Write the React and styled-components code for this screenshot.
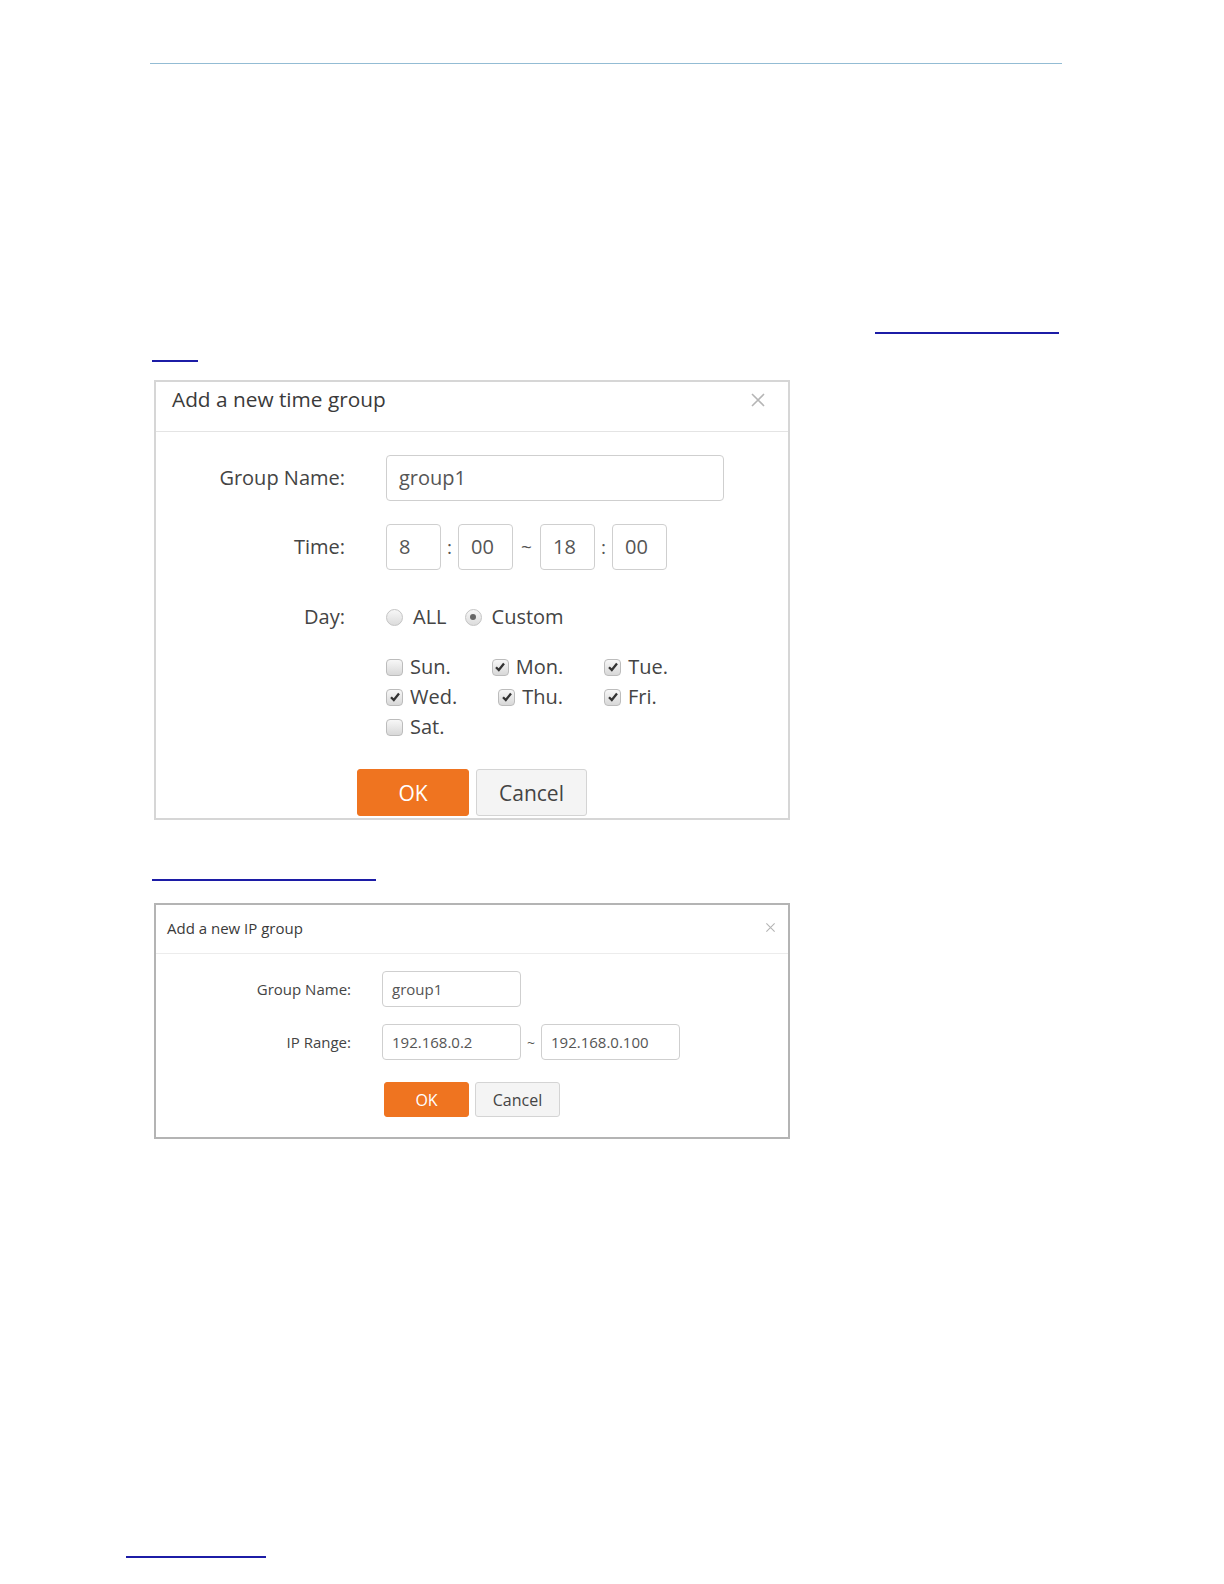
import React from 'react'
import styled, { createGlobalStyle } from 'styled-components';

const GlobalStyle = createGlobalStyle`
  body {
    margin: 0;
    background: #fff;
    font-family: "Open Sans", "Liberation Sans", sans-serif;
  }
`

const CloseIcon = ({ size }) => (
  <svg width={size} height={size} viewBox="0 0 16 16" fill="none" stroke="#b5b5b5" strokeWidth="1.6">
    <path d="M2 2 L14 14 M14 2 L2 14" />
  </svg>
)

const Check = () => (
  <svg width="12" height="12" viewBox="0 0 12 12">
    <path d="M2 6.2 L4.8 9 L10 2.5" fill="none" stroke="#333" strokeWidth="2.3" />
  </svg>
)

const CheckItem = ({ checked, label }) => (
  <SCheckItem>
    <SBox>{checked && <Check />}</SBox>
    {label}
  </SCheckItem>
)

const RadioItem = ({ checked, label }) => (
  <SRadioItem>
    <SRadio $checked={checked} />
    {label}
  </SRadioItem>
)

const App = () => {
  const days = [
    ['Sun.', false], ['Mon.', true], ['Tue.', true],
    ['Wed.', true], ['Thu.', true], ['Fri.', true],
    ['Sat.', false],
  ];

  return (
    <SPage>
      <GlobalStyle />
      <SHeaderRule />
      <SRule $top={268} $left={875} $width={184} />
      <SRule $top={26} $left={152} $width={46} />

      <STimeDialog>
        <STimeHeader>
          <span>Add a new time group</span>
          <SClose $top={2}><CloseIcon size={16} /></SClose>
        </STimeHeader>
        <STimeForm>
          <SLabel $big>Group Name:</SLabel>
          <SBigInput $width={338}>group1</SBigInput>

          <SLabel $big>Time:</SLabel>
          <STimeRow>
            <SBigInput $width={55}>8</SBigInput>
            <SSep $width={17}>:</SSep>
            <SBigInput $width={55}>00</SBigInput>
            <SSep $width={27}>~</SSep>
            <SBigInput $width={55}>18</SBigInput>
            <SSep $width={17}>:</SSep>
            <SBigInput $width={55}>00</SBigInput>
          </STimeRow>

          <SLabel $big $tall>Day:</SLabel>
          <SDayCol>
            <SRadioRow>
              <RadioItem label="ALL" />
              <RadioItem checked label="Custom" />
            </SRadioRow>
            <SCheckGrid>
              {days.map(([d, c]) => <CheckItem key={d} label={d} checked={c} />)}
            </SCheckGrid>
          </SDayCol>
        </STimeForm>
        <SButtons $gap={7}>
          <SButton $primary $w={112} $h={47} $fs={21}>OK</SButton>
          <SButton $w={111} $h={47} $fs={21}>Cancel</SButton>
        </SButtons>
      </STimeDialog>

      <SRule $top={59} $left={152} $width={224} />

      <SIpDialog>
        <SIpHeader>
          <span>Add a new IP group</span>
          <SClose $top={0}><CloseIcon size={11} /></SClose>
        </SIpHeader>
        <SIpForm>
          <SLabel>Group Name:</SLabel>
          <SSmallInput>group1</SSmallInput>

          <SLabel>IP Range:</SLabel>
          <STimeRow>
            <SSmallInput>192.168.0.2</SSmallInput>
            <SSep $width={20} $small>~</SSep>
            <SSmallInput>192.168.0.100</SSmallInput>
          </STimeRow>
        </SIpForm>
        <SButtons $gap={6} $small>
          <SButton $primary $w={85} $h={35} $fs={16}>OK</SButton>
          <SButton $w={85} $h={35} $fs={16}>Cancel</SButton>
        </SButtons>
      </SIpDialog>

      <SRule $top={417} $left={126} $width={140} />
    </SPage>
  )
};

export default App;

const SPage = styled.div`
  width: 1224px;
  height: 1584px;
  overflow: hidden;
  padding-top: 63px;
  box-sizing: border-box;
  color: #444;
`
const SHeaderRule = styled.div`
  margin: 0 162px 0 150px;
  height: 1px;
  background: #93bcd4;
`
const SRule = styled.div`
  margin: ${p => p.$top}px 0 0 ${p => p.$left}px;
  width: ${p => p.$width}px;
  height: 2px;
  background: #1c1ca6;
`
const SDialogBase = styled.div`
  margin-left: 154px;
  width: 636px;
  box-sizing: border-box;
  background: #fff;
`
const STimeDialog = styled(SDialogBase)`
  margin-top: 18px;
  height: 440px;
  border: 2px solid #d6d6d6;
`
const SIpDialog = styled(SDialogBase)`
  margin-top: 22px;
  height: 236px;
  border: 2px solid #b4b4b4;
`
const STimeHeader = styled.div`
  position: relative;
  height: 50px;
  box-sizing: border-box;
  padding: 3px 16px 0;
  font-size: 20.8px;
  line-height: 28px;
  color: #3a3a3a;
  border-bottom: 1px solid #e4e4e4;
`
const SIpHeader = styled.div`
  position: relative;
  height: 49px;
  box-sizing: border-box;
  padding: 12px 11px 0;
  font-size: 15px;
  line-height: 22px;
  color: #3a3a3a;
  border-bottom: 1px solid #ececec;
`
const SClose = styled.span`
  position: absolute;
  right: 22px;
  top: ${p => p.$top + 8}px;
  line-height: 0;
  ${SIpHeader} & {
    right: 12px;
    top: 17px;
  }
`
const SForm = styled.div`
  display: grid;
  align-items: start;
`
const STimeForm = styled(SForm)`
  grid-template-columns: 189px 338px;
  column-gap: 41px;
  row-gap: 23px;
  padding-top: 23px;
`
const SIpForm = styled(SForm)`
  grid-template-columns: 195px auto;
  column-gap: 31px;
  row-gap: 17px;
  padding-top: 17px;
`
const SLabel = styled.div`
  text-align: right;
  font-size: ${p => (p.$big ? 20 : 15)}px;
  line-height: ${p => (p.$big ? (p.$tall ? 26 : 46) : 36)}px;
  color: #444;
  ${p => p.$tall && 'margin-top: 11px;'}
`
const SInputBase = styled.div`
  box-sizing: border-box;
  border: 1px solid #cfcfcf;
  border-radius: 4px;
  background: #fff;
  color: #555;
  white-space: nowrap;
`
const SBigInput = styled(SInputBase)`
  width: ${p => p.$width}px;
  height: 46px;
  padding-left: 12px;
  font-size: 20px;
  line-height: 44px;
`
const SSmallInput = styled(SInputBase)`
  width: 139px;
  height: 36px;
  padding-left: 9px;
  font-size: 15px;
  line-height: 34px;
`
const STimeRow = styled.div`
  display: flex;
  align-items: center;
`
const SSep = styled.span`
  width: ${p => p.$width}px;
  text-align: center;
  font-size: ${p => (p.$small ? 14 : 19)}px;
  color: #555;
`
const SDayCol = styled.div`
  display: flex;
  flex-direction: column;
  margin-top: 11px;
`
const SRadioRow = styled.div`
  display: flex;
  gap: 18px;
  font-size: 20px;
  line-height: 26px;
`
const SRadioItem = styled.span`
  display: inline-flex;
  align-items: center;
  gap: 10px;
`
const SRadio = styled.span`
  position: relative;
  width: 17px;
  height: 17px;
  border-radius: 50%;
  box-sizing: border-box;
  border: 1px solid #c4c4c4;
  background: linear-gradient(#f7f7f7, #dcdcdc);
  &::after {
    content: '';
    display: ${p => (p.$checked ? 'block' : 'none')};
    position: absolute;
    left: 4.5px;
    top: 4.5px;
    width: 6px;
    height: 6px;
    border-radius: 50%;
    background: #666;
  }
`
const SCheckGrid = styled.div`
  display: flex;
  flex-wrap: wrap;
  width: 300px;
  column-gap: 41px;
  margin-top: 22px;
  font-size: 20px;
  line-height: 30px;
`
const SCheckItem = styled.span`
  display: inline-flex;
  align-items: center;
  gap: 7px;
`
const SBox = styled.span`
  display: inline-flex;
  align-items: center;
  justify-content: center;
  width: 17px;
  height: 17px;
  box-sizing: border-box;
  border: 1px solid #bcbcbc;
  border-radius: 4px;
  background: linear-gradient(#f7f7f7, #d8d8d8);
`
const SButtons = styled.div`
  display: flex;
  justify-content: center;
  gap: ${p => p.$gap}px;
  margin-top: ${p => (p.$small ? 22 : 27)}px;
`
const SButton = styled.button`
  width: ${p => p.$w}px;
  height: ${p => p.$h}px;
  border-radius: 3px;
  font-family: inherit;
  font-size: ${p => p.$fs}px;
  padding: 0;
  border: 1px solid ${p => (p.$primary ? '#ef7420' : '#d4d4d4')};
  background: ${p => (p.$primary ? '#ef7420' : '#f4f4f4')};
  color: ${p => (p.$primary ? '#fff' : '#444')};
`
